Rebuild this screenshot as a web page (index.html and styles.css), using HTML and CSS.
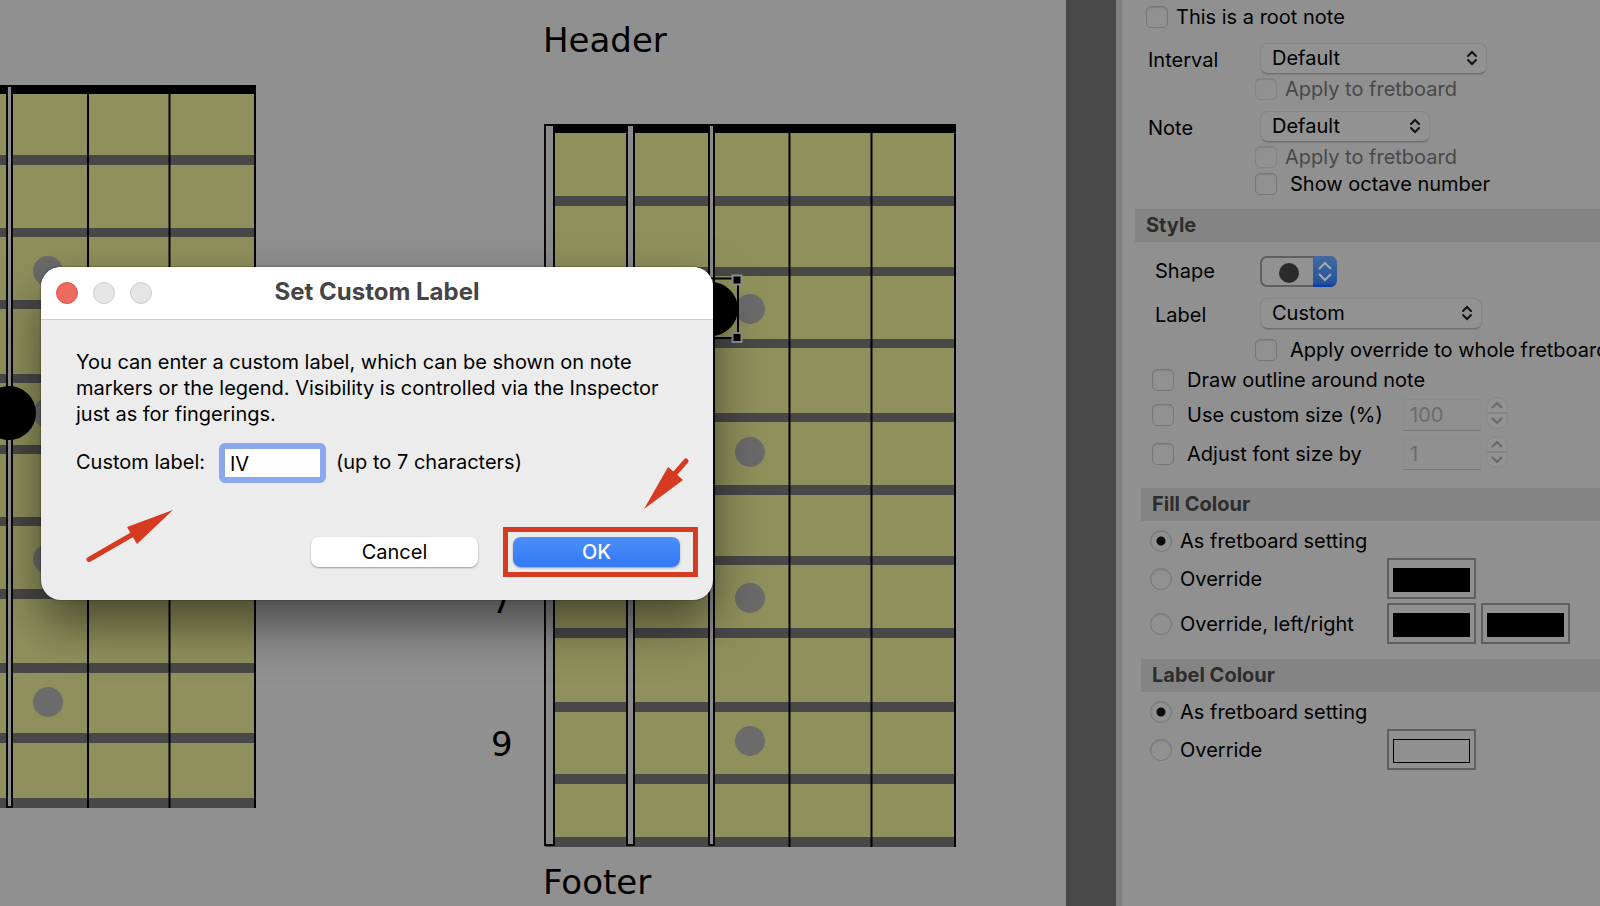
FILE: index.html
```
<!DOCTYPE html>
<html lang="en">
<head>
    <meta charset="utf-8">
    <title>Set Custom Label</title>
    <link rel="stylesheet" href="styles.css">
</head>
<body>
    <main class="workspace">
        <svg class="diagrams" role="img" aria-label="Fretboard diagrams">
            <!-- left fretboard -->
            <rect class="wood" x="-20" y="85" width="276" height="723"/>
            <rect x="-20" y="85" width="276" height="9"/>
            <g class="frets">
                <rect x="-20" y="155" width="275" height="10"/>
                <rect x="-20" y="228" width="275" height="9"/>
                <rect x="-20" y="300" width="275" height="9"/>
                <rect x="-20" y="374" width="275" height="9"/>
                <rect x="-20" y="445" width="275" height="9"/>
                <rect x="-20" y="517" width="275" height="9"/>
                <rect x="-20" y="589" width="275" height="10"/>
                <rect x="-20" y="663" width="275" height="10"/>
                <rect x="-20" y="733" width="275" height="10"/>
                <rect x="-20" y="798" width="275" height="10"/>
            </g>
            <path class="string" d="M88 85V808M169.500 85V808M255 85V808"/>
            <rect class="wound" x="7" y="86" width="5" height="721"/>
            <g class="inlays">
                <circle cx="48" cy="271" r="15"/>
                <circle cx="48" cy="413" r="15"/>
                <circle cx="48" cy="559" r="15"/>
                <circle cx="48" cy="702" r="15"/>
            </g>
            <circle cx="9" cy="413" r="27"/>

            <!-- right fretboard -->
            <rect class="wood" x="545" y="124" width="411" height="723"/>
            <rect x="545" y="124" width="411" height="9"/>
            <g class="frets">
                <rect x="545" y="196" width="410" height="10"/>
                <rect x="545" y="267" width="410" height="9"/>
                <rect x="545" y="339" width="410" height="9"/>
                <rect x="545" y="413" width="410" height="9"/>
                <rect x="545" y="485" width="410" height="10"/>
                <rect x="545" y="556" width="410" height="9"/>
                <rect x="545" y="628" width="410" height="10"/>
                <rect x="545" y="702" width="410" height="10"/>
                <rect x="545" y="774" width="410" height="10"/>
                <rect x="545" y="837" width="410" height="10"/>
            </g>
            <path class="string" d="M789.500 124V847M871.500 124V847M955 124V847"/>
            <rect class="wound" x="545" y="125" width="9" height="720"/>
            <rect class="wound" x="627" y="125" width="7" height="720"/>
            <rect class="wound" x="709" y="125" width="5" height="720"/>
            <g class="inlays">
                <circle cx="750" cy="309" r="15"/>
                <circle cx="750" cy="452" r="15"/>
                <circle cx="750" cy="598" r="15"/>
                <circle cx="750" cy="741" r="15"/>
            </g>
            <circle cx="711" cy="309" r="27"/>
            <path class="selection" d="M680 278.500H738V338H680Z"/>
            <rect class="handle" x="732.500" y="275.500" width="9" height="9"/>
            <rect class="handle" x="732.500" y="333" width="9" height="9"/>

            <text x="543" y="52">Header</text>
            <text x="491" y="613">7</text>
            <text x="491" y="756">9</text>
            <text x="543" y="894">Footer</text>
        </svg>

        <form class="dialog" role="dialog" aria-labelledby="dialogTitle">
            <div class="titlebar">
                <div class="lights">
                    <button type="button" class="light close" aria-label="Close"></button>
                    <button type="button" class="light" aria-label="Minimise" disabled></button>
                    <button type="button" class="light" aria-label="Zoom" disabled></button>
                </div>
                <h1 id="dialogTitle">Set Custom Label</h1>
            </div>
            <div class="dialog-body">
                <p>You can enter a custom label, which can be shown on note<br>
                markers or the legend. Visibility is controlled via the Inspector<br>
                just as for fingerings.</p>
                <div class="field">
                    <label for="customLabel">Custom label:</label>
                    <input type="text" id="customLabel" maxlength="7" value="IV">
                    <span>(up to 7 characters)</span>
                </div>
                <div class="buttons">
                    <button type="button" class="btn">Cancel</button>
                    <div class="highlight">
                        <button type="submit" class="btn primary">OK</button>
                    </div>
                </div>
            </div>
            <svg class="arrows" viewBox="0 0 672 333" aria-hidden="true">
                <path class="shaft" d="M48 292.500L94 266M645 194L630 211"/>
                <path d="M132 243L86 260L90 267L96 277ZM603 242L627 200L633 205L642 213Z"/>
            </svg>
        </form>
    </main>

    <aside class="inspector">
        <div class="row root">
            <input type="checkbox" id="rootNote">
            <label for="rootNote">This is a root note</label>
        </div>
        <div class="row interval-row">
            <label class="name" for="interval">Interval</label>
            <div class="select wide">
                <select id="interval"><option>Default</option></select>
                <svg viewBox="0 0 10 16"><path d="M1 6L5 2L9 6M1 10L5 14L9 10"/></svg>
            </div>
        </div>
        <div class="row check indent">
            <input type="checkbox" id="applyInterval" disabled>
            <label for="applyInterval">Apply to fretboard</label>
        </div>
        <div class="row interval-row">
            <label class="name" for="note">Note</label>
            <div class="select narrow">
                <select id="note"><option>Default</option></select>
                <svg viewBox="0 0 10 16"><path d="M1 6L5 2L9 6M1 10L5 14L9 10"/></svg>
            </div>
        </div>
        <div class="row check indent">
            <input type="checkbox" id="applyNote" disabled>
            <label for="applyNote">Apply to fretboard</label>
        </div>
        <div class="row check indent spaced">
            <input type="checkbox" id="octave">
            <label for="octave">Show octave number</label>
        </div>

        <h2 class="style-heading">Style</h2>
        <div class="row style-row shape-row">
            <label class="name" for="shape">Shape</label>
            <div class="shape">
                <select id="shape"><option aria-label="Circle"></option></select>
                <svg class="dot" viewBox="0 0 22 22"><circle cx="11" cy="11" r="10"/></svg>
                <svg class="stepper-arrows" viewBox="0 0 24 31"><path d="M6 13L12 7L18 13M6 18L12 24L18 18"/></svg>
            </div>
        </div>
        <div class="row style-row">
            <label class="name" for="label">Label</label>
            <div class="select medium">
                <select id="label"><option>Custom</option></select>
                <svg viewBox="0 0 10 16"><path d="M1 6L5 2L9 6M1 10L5 14L9 10"/></svg>
            </div>
        </div>
        <div class="row check indent spaced override">
            <input type="checkbox" id="applyOverride">
            <label for="applyOverride">Apply override to whole fretboard</label>
        </div>
        <div class="row check option">
            <input type="checkbox" id="outline">
            <label for="outline">Draw outline around note</label>
        </div>
        <div class="row option number">
            <input type="checkbox" id="customSize">
            <label for="customSize">Use custom size (%)</label>
            <input type="text" aria-label="Size in percent" value="100" disabled>
            <svg class="stepper" viewBox="0 0 22 32"><rect x="1" y="1" width="20" height="30" rx="8"/><path class="divider" d="M1 16H21"/><path d="M6 11L11 6L16 11M6 21L11 26L16 21"/></svg>
        </div>
        <div class="row option number">
            <input type="checkbox" id="fontSize">
            <label for="fontSize">Adjust font size by</label>
            <input type="text" aria-label="Font size adjustment" value="1" disabled>
            <svg class="stepper" viewBox="0 0 22 32"><rect x="1" y="1" width="20" height="30" rx="8"/><path class="divider" d="M1 16H21"/><path d="M6 11L11 6L16 11M6 21L11 26L16 21"/></svg>
        </div>

        <h2 class="fill-heading">Fill Colour</h2>
        <div class="row radio">
            <input type="radio" name="fill" id="fillDefault" checked>
            <label for="fillDefault">As fretboard setting</label>
        </div>
        <div class="row radio colours">
            <input type="radio" name="fill" id="fillOverride">
            <label for="fillOverride">Override</label>
            <input type="color" aria-label="Fill colour" value="#000000">
        </div>
        <div class="row radio colours">
            <input type="radio" name="fill" id="fillSplit">
            <label for="fillSplit">Override, left/right</label>
            <input type="color" aria-label="Left fill colour" value="#000000">
            <input type="color" aria-label="Right fill colour" value="#000000">
        </div>

        <h2>Label Colour</h2>
        <div class="row radio">
            <input type="radio" name="text" id="textDefault" checked>
            <label for="textDefault">As fretboard setting</label>
        </div>
        <div class="row radio colours">
            <input type="radio" name="text" id="textOverride">
            <label for="textOverride">Override</label>
            <input type="color" aria-label="Label colour" value="#909090">
        </div>
    </aside>
</body>
</html>
```

FILE: styles.css
```
* {
    box-sizing: border-box;
}
body {
    margin: 0;
    height: 100vh;
    display: flex;
    overflow: hidden;
    background: #909090;
    color: #000;
    font: 20px/26px Inter, "Liberation Sans", sans-serif;
}
input, select, button {
    font: inherit;
    color: inherit;
    margin: 0;
}

/* Fretboard canvas */
.workspace {
    flex: 1;
    position: relative;
    border-right: 50px solid #494949;
}
.diagrams {
    display: block;
    width: 100%;
    height: 100%;
}
.diagrams text {
    font: 34px "DejaVu Sans", sans-serif;
}
.wood {
    fill: #90905c;
}
.frets {
    fill: #484848;
}
.inlays {
    fill: #6b6b6b;
}
.string {
    stroke: #000;
    stroke-width: 2;
}
.wound {
    fill: #8b8b8b;
    stroke: #08080c;
    stroke-width: 2;
}
.selection {
    fill: none;
    stroke: #000;
    stroke-width: 2;
}
.handle {
    stroke: #909090;
    stroke-width: 2;
}

/* Dialog */
.dialog {
    position: absolute;
    left: 41px;
    top: 267px;
    width: 672px;
    border-radius: 20px;
    background: #ececec;
    box-shadow: 0 0 2px rgba(0, 0, 0, 0.6), 0 24px 50px rgba(0, 0, 0, 0.5);
}
.titlebar {
    position: relative;
    height: 53px;
    border-bottom: 1px solid #cfcfcf;
    border-radius: 20px 20px 0 0;
    background: #fff;
}
.lights {
    position: absolute;
    left: 15px;
    top: 15px;
    display: flex;
    gap: 15px;
}
.light {
    width: 22px;
    height: 22px;
    padding: 0;
    border: 1px solid #cdcdcd;
    border-radius: 50%;
    background: #e5e5e5;
}
.light.close {
    border-color: #de5448;
    background: #ed6a5e;
}
h1 {
    margin: 0;
    font-size: 24px;
    font-weight: 700;
    line-height: 50px;
    text-align: center;
    color: #454545;
}
.dialog-body {
    padding: 29px 15px 23px 35px;
}
.dialog p {
    margin: 0 0 16px;
    white-space: nowrap;
}
.field {
    display: flex;
    align-items: center;
    height: 40px;
    white-space: nowrap;
}
.field label, .field span {
    padding-bottom: 2px;
}
.field label {
    width: 143px;
}
.field input {
    width: 107px;
    height: 40px;
    margin-right: 10px;
    padding: 2px 5px 0;
    border: 6px solid #8ca8ec;
    border-radius: 6px;
    background: #fff;
    outline: none;
}
.buttons {
    display: flex;
    align-items: center;
    justify-content: flex-end;
    gap: 25px;
    margin-top: 44px;
}
.btn {
    width: 167px;
    height: 30px;
    padding: 0;
    border: none;
    border-radius: 8px;
    background: #fff;
    box-shadow: 0 1px 2px rgba(0, 0, 0, 0.35);
    line-height: 30px;
}
.primary {
    background: linear-gradient(#4a90f8, #3478f6);
    color: #fff;
    font-weight: 500;
}
.highlight {
    display: flex;
    padding: 5px 13px 5px 5px;
    border: 5px solid #d63a20;
}
.arrows {
    position: absolute;
    left: 0;
    top: 0;
    width: 100%;
    fill: #d63a20;
    pointer-events: none;
}
.shaft {
    stroke: #d63a20;
    stroke-width: 5;
    stroke-linecap: round;
}

/* Inspector */
.inspector {
    width: 484px;
    border-left: 6px solid #808080;
    overflow: hidden;
    white-space: nowrap;
}
.row {
    display: flex;
    align-items: center;
    height: 33px;
    padding-left: 26px;
}
.root {
    padding-left: 24px;
}
.interval-row {
    height: 32px;
    margin-top: 9px;
}
.name {
    width: 112px;
    padding-top: 3px;
}
.style-row {
    height: 32px;
    margin-top: 10px;
    padding-left: 33px;
}
.shape-row {
    margin-top: 13px;
}
.style-row .name {
    width: 105px;
}
.shape-row .name {
    padding-top: 0;
}
.check {
    height: 24px;
    margin-top: 3px;
}
.indent {
    padding-left: 133px;
}
.override {
    margin-top: 9px;
}
.option {
    margin-top: 6px;
    padding-left: 30px;
}
input[type="checkbox"], input[type="radio"] {
    appearance: none;
    flex: none;
    width: 22px;
    height: 22px;
    margin-right: 8px;
    border: 1px solid #777;
    border-radius: 5px;
    background: #919191;
    box-shadow: inset 0 1px 1px rgba(0, 0, 0, 0.1);
}
input[type="checkbox"]:disabled {
    border-color: #838383;
}
input:disabled + label {
    color: #484848;
}
.spaced input[type="checkbox"], .option input[type="checkbox"] {
    margin-right: 13px;
}
.select {
    position: relative;
}
.select select {
    appearance: none;
    width: 100%;
    height: 31px;
    padding: 0 11px;
    border: 1px solid #868686;
    border-bottom-color: #707070;
    border-radius: 8px;
    background: #929292;
    box-shadow: 0 1px 1px rgba(0, 0, 0, 0.12);
    display: block;
}
.select svg {
    position: absolute;
    right: 10px;
    top: 7px;
    width: 10px;
    height: 16px;
    fill: none;
    stroke: #111;
    stroke-width: 2;
    stroke-linecap: round;
    pointer-events: none;
}
.wide {
    width: 227px;
}
.medium {
    width: 222px;
}
.narrow {
    width: 170px;
}
.shape {
    position: relative;
    width: 77px;
}
.shape select {
    appearance: none;
    display: block;
    width: 100%;
    height: 31px;
    border: 2px solid #606060;
    border-radius: 7px;
    background: #929292;
}
.shape svg {
    position: absolute;
    pointer-events: none;
}
.dot {
    left: 18px;
    top: 6px;
    width: 22px;
    fill: #2b2b2b;
}
.stepper-arrows {
    right: 0;
    top: 0;
    width: 24px;
    height: 31px;
    border-radius: 0 7px 7px 0;
    background: linear-gradient(#436a9f, #2554a0 85%, #0a36a0);
    fill: none;
    stroke: #a8a8a8;
    stroke-width: 2;
}
.number {
    height: 32px;
    margin-top: 7px;
}
.number label {
    width: 216px;
}
.number input[type="text"] {
    width: 78px;
    height: 32px;
    padding: 0 6px;
    border: 1px solid #8c8c8c;
    border-bottom-color: #777;
    background: #909090;
    color: #6b6b6b;
}
.stepper {
    width: 22px;
    height: 32px;
    margin: -4px 0 0 5px;
    fill: #939393;
    stroke: #888;
}
.stepper path {
    fill: none;
    stroke: #696969;
    stroke-width: 2;
}
.stepper .divider {
    stroke: #848484;
}
h2 {
    margin: 15px 0 0 19px;
    padding-left: 11px;
    height: 33px;
    background: #848484;
    color: #2d2d2d;
    font-size: 20px;
    font-weight: 700;
    line-height: 32px;
}
.style-heading {
    margin: 13px 0 0 13px;
}
.fill-heading {
    margin-top: 18px;
}
.radio {
    height: 24px;
    margin-top: 8px;
    padding-left: 28px;
}
input[type="radio"] {
    border-radius: 50%;
}
input[type="radio"]:checked {
    background: radial-gradient(circle, #0c0c0c 4px, #919191 5px);
}
.colours {
    height: 41px;
    margin-top: 5px;
}
.colours + .colours {
    margin-top: 4px;
}
.colours label {
    width: 207px;
}
input[type="color"] {
    appearance: none;
    width: 89px;
    height: 41px;
    margin-right: 5px;
    padding: 8px 4px 5px;
    border: 2px solid #606060;
    background: none;
}
input[type="color"]::-webkit-color-swatch-wrapper {
    padding: 0;
}
input[type="color"]::-webkit-color-swatch {
    border: 1px solid #000;
    border-radius: 0;
}
```
